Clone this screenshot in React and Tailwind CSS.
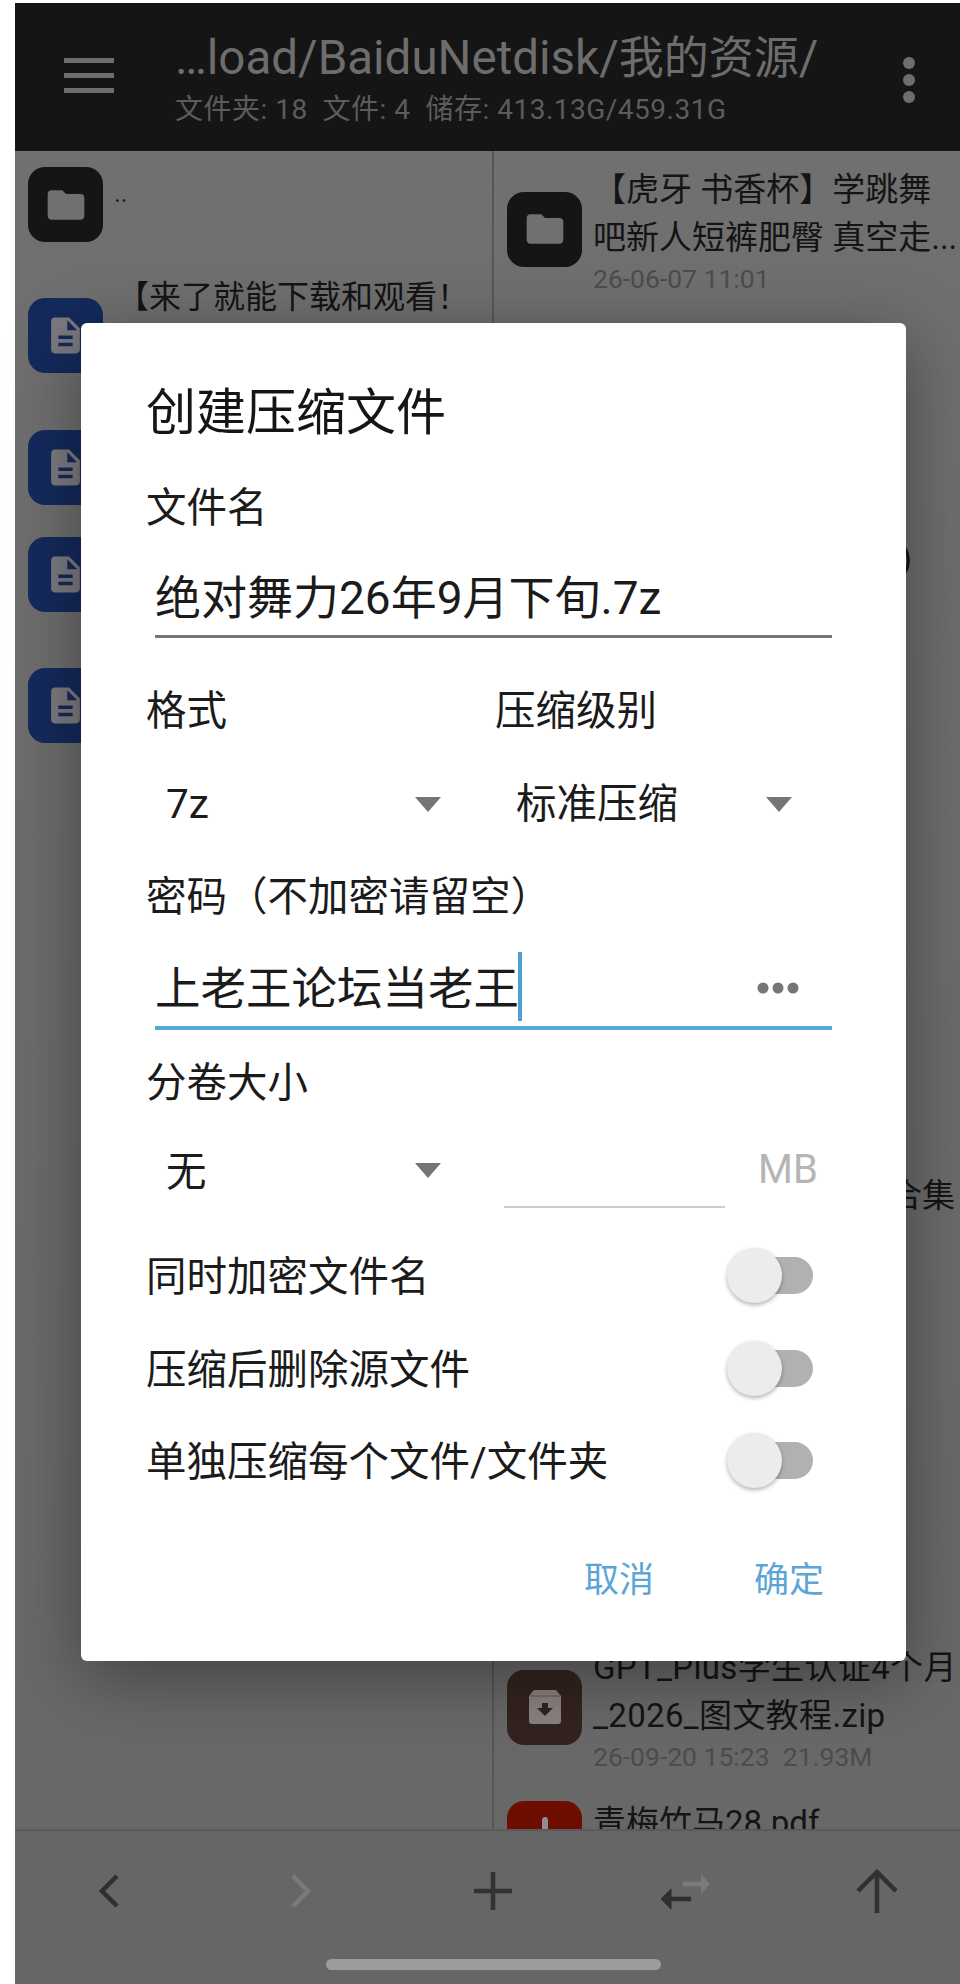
const FONT = "font-['Roboto','Noto_Sans_CJK_SC',sans-serif]";

function FolderGlyph() {
  return (
    <svg width="44" height="44" viewBox="0 0 24 24" fill="#707070">
      <path d="M10 4H4c-1.1 0-2 .9-2 2v12c0 1.1.9 2 2 2h16c1.1 0 2-.9 2-2V8c0-1.1-.9-2-2-2h-8l-2-2z" />
    </svg>
  );
}

function DocGlyph() {
  return (
    <svg width="43" height="43" viewBox="0 0 24 24" fill="#7c7c80">
      <path d="M14 2H6c-1.1 0-2 .9-2 2v16c0 1.1.9 2 2 2h12c1.1 0 2-.9 2-2V8l-6-6zm2 16H8v-2h8v2zm0-4H8v-2h8v2zm-3-5V3.5L18.5 9H13z" />
    </svg>
  );
}

function ZipGlyph() {
  return (
    <svg width="34" height="34" viewBox="0 0 34 34">
      <path d="M6 0h22l5 6v25a3 3 0 0 1-3 3H4a3 3 0 0 1-3-3V6z" fill="#8a8280" />
      <path d="M2 6h30" stroke="#6f6461" strokeWidth="1.5" />
      <path d="M14 13h6v5h5l-8 8-8-8h5z" fill="#33231f" />
    </svg>
  );
}

function Icon({ color, className = "", children }) {
  return (
    <div className={`w-[75px] h-[75px] shrink-0 rounded-[17px] flex items-center justify-center ${color} ${className}`}>
      {children}
    </div>
  );
}

function ListEntry({ icon, lines, meta, className = "", textClass = "" }) {
  return (
    <div className={`flex items-center pl-[13px] ${className}`}>
      {icon}
      <div className="ml-[11px] min-w-0">
        {lines.map((l) => (
          <p key={l} className={`text-[33px] leading-[48px] text-[#141414] whitespace-pre ${textClass}`}>{l}</p>
        ))}
        <p className="text-[26.5px] leading-[34px] text-[#4c4c4c] whitespace-pre">{meta}</p>
      </div>
    </div>
  );
}

function Caret() {
  return (
    <svg width="26" height="15" viewBox="0 0 26 15">
      <path d="M0 0h26L13 15z" fill="#757575" />
    </svg>
  );
}

function Toggle() {
  return (
    <div className="relative w-[86px] h-[55px] mr-[19px] mb-[3px] flex items-center justify-end">
      <div className="w-[70px] h-[37px] rounded-full bg-[#b1b1b1]" />
      <div className="absolute left-0 top-0 w-[55px] h-[55px] rounded-full bg-[#ececec] shadow-[0_2px_4px_rgba(0,0,0,0.3)]" />
    </div>
  );
}

function SwitchRow({ label, className = "" }) {
  return (
    <div className={`h-[60px] flex items-center justify-between ${className}`}>
      <span className="text-[40.5px] leading-[60px] text-[#1b1b1b]">{label}</span>
      <Toggle />
    </div>
  );
}

function ArchiveDialog() {
  return (
    <div className="absolute left-[81px] top-[323px] w-[825px] h-[1338px] bg-white rounded-[6px] pl-[65px] pr-[74px] shadow-[0_16px_70px_rgba(0,0,0,0.38)]">
      <h1 className="pt-[65px] text-[50px] leading-[50px] text-[#151515] font-normal">创建压缩文件</h1>

      <p className="mt-[50px] text-[40.5px] leading-[40px] text-[#1b1b1b]">文件名</p>
      <div className="mt-[45px] ml-[9px] pb-[12px] border-b-[3px] border-[#767676] text-[46px] leading-[50px] text-[#1b1b1b]">
        绝对舞力26年9月下旬.7z
      </div>

      <div className="mt-[53px] flex text-[40.5px] leading-[40px] text-[#1b1b1b]">
        <span className="w-[349px]">格式</span>
        <span>压缩级别</span>
      </div>
      <div className="mt-[43px] flex h-[60px] text-[40.5px] text-[#1b1b1b]">
        <div className="w-[295px] mr-[54px] pl-[20px] flex items-center justify-between">
          <span>7z</span>
          <Caret />
        </div>
        <div className="w-[297px] pl-[21px] flex items-center justify-between">
          <span>标准压缩</span>
          <Caret />
        </div>
      </div>

      <p className="mt-[43px] text-[40.5px] leading-[40px] text-[#1b1b1b]">密码（不加密请留空）</p>
      <div className="mt-[33px] ml-[9px] pt-[4px] h-[80px] border-b-4 border-[#55a6d9] flex items-center text-[45.5px] leading-[50px] text-[#1b1b1b]">
        <span>上老王论坛当老王</span>
        <span className="self-start w-[4px] h-[69px] -mt-[2px] bg-[#4e9fd3] -ml-[1px]" />
        <svg className="ml-auto mr-[32px] -translate-y-[2px]" width="44" height="14" viewBox="0 0 44 14" fill="#757575">
          <circle cx="7" cy="7" r="5.5" />
          <circle cx="22" cy="7" r="5.5" />
          <circle cx="37" cy="7" r="5.5" />
        </svg>
      </div>

      <p className="mt-[33px] text-[40.5px] leading-[40px] text-[#1b1b1b]">分卷大小</p>
      <div className="mt-[37px] flex h-[68px] text-[40.5px] text-[#1b1b1b]">
        <div className="w-[295px] h-[60px] mr-[63px] pl-[20px] flex items-center justify-between">
          <span className="pt-[4px]">无</span>
          <Caret />
        </div>
        <div className="w-[221px] h-[68px] border-b-2 border-[#cdcdcd]" />
        <span className="ml-[33px] h-[60px] leading-[60px] text-[#b5b5b5] text-[40px]">MB</span>
      </div>

      <SwitchRow label="同时加密文件名" className="mt-[39px]" />
      <SwitchRow label="压缩后删除源文件" className="mt-[33px]" />
      <SwitchRow label="单独压缩每个文件/文件夹" className="mt-[32px]" />

      <div className="mt-[69px] pr-[8px] flex justify-end gap-[100px] text-[35px] leading-[40px] text-[#5ba6d6]">
        <span>取消</span>
        <span>确定</span>
      </div>
    </div>
  );
}

function BottomBar() {
  const slot = "w-[192px] shrink-0 h-[48px] flex items-center justify-center";
  return (
    <div className="h-[155px] shrink-0 bg-[#666666] border-t-2 border-[#5a5a5a] relative">
      <div className="flex pt-[36px] -ml-[2px]">
        <div className={slot}>
          <svg width="24" height="36" viewBox="0 0 24 36" fill="none" stroke="#2f2f2f" strokeWidth="4.5">
            <path d="M20 3 5 18l15 15" />
          </svg>
        </div>
        <div className={slot}>
          <svg width="24" height="36" viewBox="0 0 24 36" fill="none" stroke="#7b7b7b" strokeWidth="4.5">
            <path d="m4 3 15 15L4 33" />
          </svg>
        </div>
        <div className={slot}>
          <svg width="38" height="38" viewBox="0 0 38 38" stroke="#333333" strokeWidth="4.5">
            <path d="M19 0v38M0 19h38" />
          </svg>
        </div>
        <div className={slot}>
          <svg width="56" height="48" viewBox="0 0 56 48" fill="none" strokeWidth="4.5">
            <path d="M46 17H26" stroke="#7b7b7b" />
            <path d="M44 7l9 10-9 10z" fill="#7b7b7b" />
            <path d="M12 32h22" stroke="#2f2f2f" />
            <path d="M14 22 4 32l10 10z" fill="#2f2f2f" stroke="#2f2f2f" strokeWidth="1" />
          </svg>
        </div>
        <div className={slot}>
          <svg width="44" height="44" viewBox="0 0 44 44" fill="none" stroke="#303030" strokeWidth="4.5">
            <path d="M22 44V3M3 22 22 3l19 19" />
          </svg>
        </div>
      </div>
      <div className="mt-[44px] ml-[311px] w-[335px] h-[11px] rounded-full bg-[#9c9c9c]" />
    </div>
  );
}

export default function App() {
  return (
    <div className={`relative w-[960px] h-[1984px] overflow-hidden bg-white pl-[15px] pt-[3px] ${FONT}`}>
      <div className="h-full flex flex-col bg-[#6f6f6f]">
        {/* app bar */}
        <header className="h-[148px] shrink-0 bg-[#151515] flex items-start">
          <div className="ml-[49px] mt-[55px] flex flex-col gap-[10px] w-[50px]">
            <span className="h-[5px] bg-[#6e6e6e]" />
            <span className="h-[5px] bg-[#6e6e6e]" />
            <span className="h-[5px] bg-[#6e6e6e]" />
          </div>
          <div className="ml-[61px] mt-[27px]">
            <p className="text-[47.5px] leading-[56px] text-[#6d6d6d] whitespace-pre">
              …load/BaiduNetdisk/<span className="text-[45px]">我的资源</span>/
            </p>
            <p className="mt-[5px] text-[28px] tracking-[0.5px] leading-[36px] text-[#5c5c5c] whitespace-pre">文件夹: 18  文件: 4  储存: 413.13G/459.31G</p>
          </div>
          <div className="ml-auto mr-[45px] mt-[54px] flex flex-col gap-[5px]">
            <span className="w-[12px] h-[12px] rounded-full bg-[#6e6e6e]" />
            <span className="w-[12px] h-[12px] rounded-full bg-[#6e6e6e]" />
            <span className="w-[12px] h-[12px] rounded-full bg-[#6e6e6e]" />
          </div>
        </header>

        {/* file panes */}
        <main className="flex-1 min-h-0 flex overflow-hidden bg-gradient-to-b from-[#707070] to-[#686868]">
          <section className="w-[479px] shrink-0 border-r-2 border-[#565656] pl-[13px] pt-[16px]">
            <div className="flex">
              <Icon color="bg-[#151515]"><FolderGlyph /></Icon>
              <span className="ml-[11px] mt-[11px] text-[26px] leading-[30px] text-[#222]">..</span>
            </div>
            <div className="mt-[56px] flex">
              <Icon color="bg-[#142a5c]"><DocGlyph /></Icon>
              <span className="ml-[14px] -mt-[25px] text-[32px] leading-[48px] text-[#141414] whitespace-pre">【来了就能下载和观看！</span>
            </div>
            <div className="mt-[57px]"><Icon color="bg-[#142a5c]"><DocGlyph /></Icon></div>
            <div className="mt-[32px]"><Icon color="bg-[#142a5c]"><DocGlyph /></Icon></div>
            <div className="mt-[56px]"><Icon color="bg-[#142a5c]"><DocGlyph /></Icon></div>
          </section>

          <section className="flex-1 min-w-0 pt-[15px]">
            <ListEntry
              icon={<Icon color="bg-[#151515]" className="-mt-[4px]"><FolderGlyph /></Icon>}
              lines={["【虎牙 书香杯】学跳舞", "吧新人短裤肥臀 真空走..."]}
              meta="26-06-07 11:01"
            />
            <p className="mt-[239px] pr-[48px] text-right text-[33px] leading-[48px] text-[#141414]">)</p>
            <p className="mt-[589px] pr-[5px] text-right text-[33px] leading-[48px] text-[#141414]">合集</p>
            <ListEntry
              className="mt-[424px]"
              textClass="tracking-[0.35px]"
              icon={<Icon color="bg-[#33231f]" className="-mt-[4px]"><ZipGlyph /></Icon>}
              lines={["GPT_Plus学生认证4个月", "_2026_图文教程.zip"]}
              meta="26-09-20 15:23  21.93M"
            />
            <div className="mt-[25px] flex pl-[13px]">
              <div className="mt-[2px] w-[75px] h-[75px] shrink-0 rounded-[17px] bg-[#6e0e00] flex justify-center pt-[16px]">
                <span className="w-[6px] h-[30px] rounded-t-full bg-[#8d8d95]" />
              </div>
              <span className="ml-[11px] text-[33px] leading-[48px] text-[#141414]">青梅竹马28.pdf</span>
            </div>
          </section>
        </main>

        <BottomBar />
      </div>

      <ArchiveDialog />
    </div>
  );
}
